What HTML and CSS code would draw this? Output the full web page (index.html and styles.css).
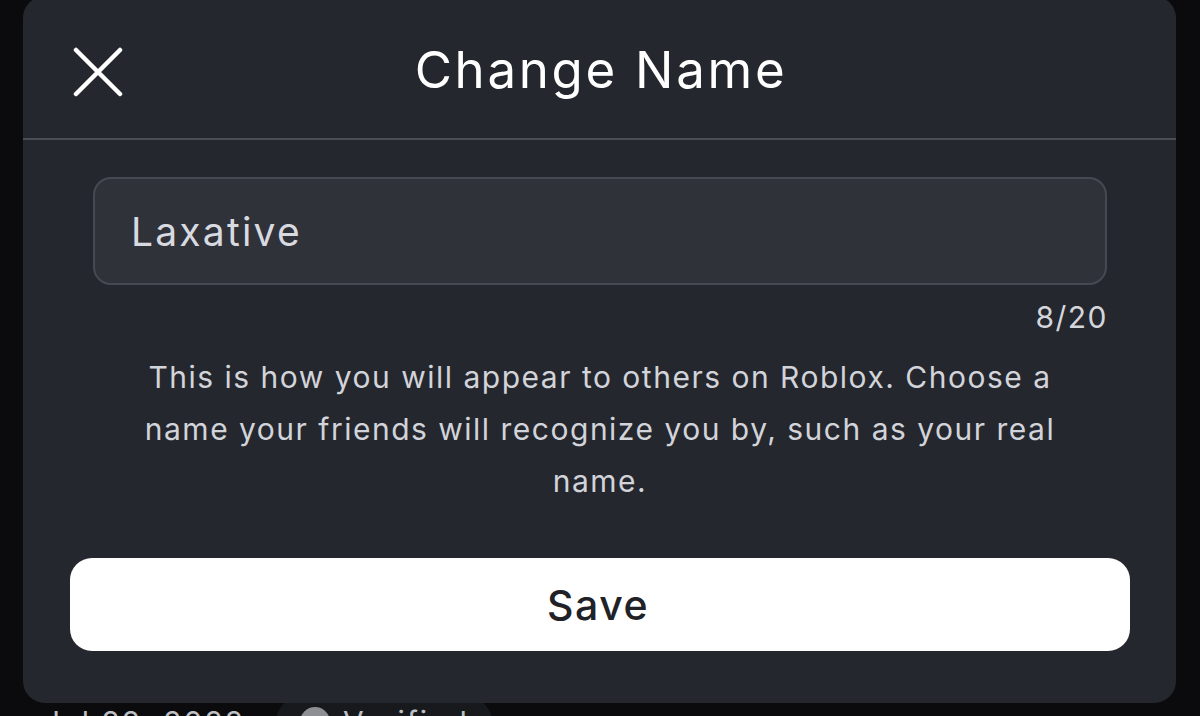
FILE: index.html
```html
<!DOCTYPE html>
<html lang="en">
<head>
<meta charset="utf-8">
<title>Change Name</title>
<link rel="stylesheet" href="styles.css">
</head>
<body>
<div class="page">
  <div class="modal">
    <div class="modal-header">
      <button class="close-btn" aria-label="Close">
        <svg width="50" height="50" viewBox="0 0 50 50"><path d="M3 3 L47 47 M47 3 L3 47" stroke="#ffffff" stroke-width="4.5" stroke-linecap="round" fill="none"/></svg>
      </button>
      <h1 class="title">Change Name</h1>
    </div>
    <div class="modal-body">
      <div class="field">
        <div class="input">Laxative</div>
        <div class="counter">8/20</div>
      </div>
      <p class="desc">This is how you will appear to others on Roblox. Choose a<br>name your friends will recognize you by, such as your real<br>name.</p>
      <button class="save-btn">Save</button>
    </div>
  </div>
  <div class="behind">
    <div class="date-wrap"><span class="date">Jul 22, 2022</span></div>
    <span class="pill"><span class="dot"></span>Verified</span>
  </div>
</div>
</body>
</html>
```

FILE: styles.css
```css
* { box-sizing: border-box; }
html, body {
  margin: 0;
  padding: 0;
  height: 716px;
  overflow: hidden;
  background: #0b0b0d;
  font-family: Inter, "Open Sans", sans-serif;
}
.page {
  display: flex;
  flex-direction: column;
  height: 716px;
}
.modal {
  margin: -4px 24px 0 23px;
  height: 707px;
  background: #25272e;
  border-radius: 22px;
  display: flex;
  flex-direction: column;
  flex-shrink: 0;
  position: relative;
  z-index: 1;
}
.modal-header {
  height: 144px;
  border-bottom: 2px solid #4b4e55;
  display: flex;
  align-items: center;
  justify-content: center;
  position: relative;
}
.close-btn {
  position: absolute;
  left: 50px;
  top: 51px;
  width: 50px;
  height: 50px;
  padding: 0;
  border: 0;
  background: none;
  display: flex;
}
.title {
  margin: 4px 0 0 3px;
  font-size: 51px;
  font-weight: 400;
  color: #ffffff;
  letter-spacing: 2.7px;
}
.modal-body {
  padding: 37px 46px 0 47px;
  display: flex;
  flex-direction: column;
}
.field {
  margin: 0 23px;
  display: flex;
  flex-direction: column;
}
.input {
  height: 108px;
  border: 2px solid #464951;
  background: #30323a;
  border-radius: 18px;
  padding: 0 36px;
  display: flex;
  align-items: center;
  font-size: 39px;
  color: #d8dae0;
  letter-spacing: 2.2px;
}
.counter {
  align-self: flex-end;
  margin-top: 13px;
  margin-right: -1px;
  font-size: 30px;
  color: #d4d6dc;
  line-height: 38px;
  letter-spacing: 1.5px;
}
.desc {
  margin: 15px 0 0 0;
  text-align: center;
  font-size: 30px;
  line-height: 52px;
  color: #d2d4da;
  letter-spacing: 1.5px;
}
.save-btn {
  margin-top: 51px;
  height: 93px;
  border: 0;
  border-radius: 22px;
  background: #ffffff;
  color: #202227;
  font-family: Inter, "Open Sans", sans-serif;
  font-size: 41px;
  font-weight: 500;
  letter-spacing: 1.5px;
  padding-left: 2px;
}
.behind {
  display: flex;
  align-items: flex-start;
  height: 13px;
  overflow: hidden;
  flex-shrink: 0;
}
.date-wrap {
  width: 245px;
  display: flex;
  justify-content: flex-end;
  overflow: hidden;
  flex-shrink: 0;
}
.date {
  margin-top: 4px;
  font-size: 30px;
  line-height: 30px;
  color: #bfc0c4;
  white-space: nowrap;
  letter-spacing: 2px;
}
.pill {
  margin-left: 30px;
  margin-top: -8px;
  width: 218px;
  height: 60px;
  padding: 12px 0 0 25px;
  border-radius: 30px;
  background: #18191c;
  color: #bfc0c4;
  font-size: 30px;
  line-height: 30px;
  display: flex;
  gap: 13px;
  letter-spacing: 2px;
  flex-shrink: 0;
}
.dot {
  width: 30px;
  height: 30px;
  border-radius: 50%;
  background: #8d8f94;
  flex-shrink: 0;
}
```
